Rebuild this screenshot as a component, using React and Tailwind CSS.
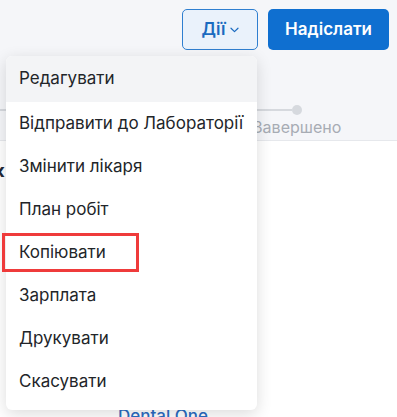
import React from "react";

const items = [
  "Редагувати",
  "Відправити до Лабораторії",
  "Змінити лікаря",
  "План робіт",
  "Копіювати",
  "Зарплата",
  "Друкувати",
  "Скасувати",
];

export default function App() {
  return (
    <div
      className="relative w-[397px] h-[417px] overflow-hidden bg-white flex flex-col"
      style={{ fontFamily: "Inter, 'Noto Sans', sans-serif" }}
    >
      {/* top area */}
      <div className="h-[141px] shrink-0 bg-[#f5f6f9] border-b border-[#e6e8ec] flex flex-col">
        <div className="flex justify-end gap-[10px] pr-[8px] pt-[9px]">
          <button className="h-[41px] w-[76px] rounded-[5px] border border-[#2f7fd0] bg-[#eaf2fb] flex items-center justify-center gap-[4px] text-[#1b6bc0] text-[17px] font-semibold">
            Дії
            <svg width="9" height="6" viewBox="0 0 9 6" fill="none">
              <path d="M1 1.2 L4.5 4.6 L8 1.2" stroke="#1b6bc0" strokeWidth="1.2" strokeLinecap="round" strokeLinejoin="round" />
            </svg>
          </button>
          <button className="h-[41px] w-[121px] rounded-[5px] bg-[#0f6fd0] text-white text-[17px] font-semibold">
            Надіслати
          </button>
        </div>
        {/* stepper */}
        <div className="flex items-start mt-[55px]">
          <div className="w-[292px] h-[2px] mt-[4px] bg-[#d6d9de]" />
          <div className="w-[10px] flex flex-col items-center">
            <div className="w-[10px] h-[10px] rounded-full bg-[#d6d9de]" />
            <div className="whitespace-nowrap text-[16px] leading-[20px] mt-[2px] text-[#a7acb4]">Завершено</div>
          </div>
        </div>
      </div>

      {/* body */}
      <div className="flex-1 flex flex-col">
        <div className="pt-[16px] -ml-[6px] text-[18px] font-bold text-[#1f2937]">к</div>
        <div className="mt-auto pl-[118px] text-[17px] leading-[20px] -mb-[9px] font-medium text-[#2b6cc2]">Dental One</div>
      </div>

      {/* dropdown menu */}
      <div className="absolute left-[6px] top-[56px] w-[251px] rounded-[6px] bg-white pb-[7px] shadow-[0_4px_16px_rgba(0,0,0,0.14)]">
        {items.map((t, i) => (
          <div
            key={t}
            className={
              "relative flex items-center px-[13px] text-[17px] text-[#222529] " +
              (i === 0 ? "h-[46px] bg-[#f3f4f6] rounded-t-[6px]" : "h-[43px]")
            }
          >
            {t}
            {i === 4 && (
              <div className="absolute left-[-4px] top-[2px] w-[137px] h-[39px] border-[3px] border-[#ef3b3b]" />
            )}
          </div>
        ))}
      </div>
    </div>
  );
}
